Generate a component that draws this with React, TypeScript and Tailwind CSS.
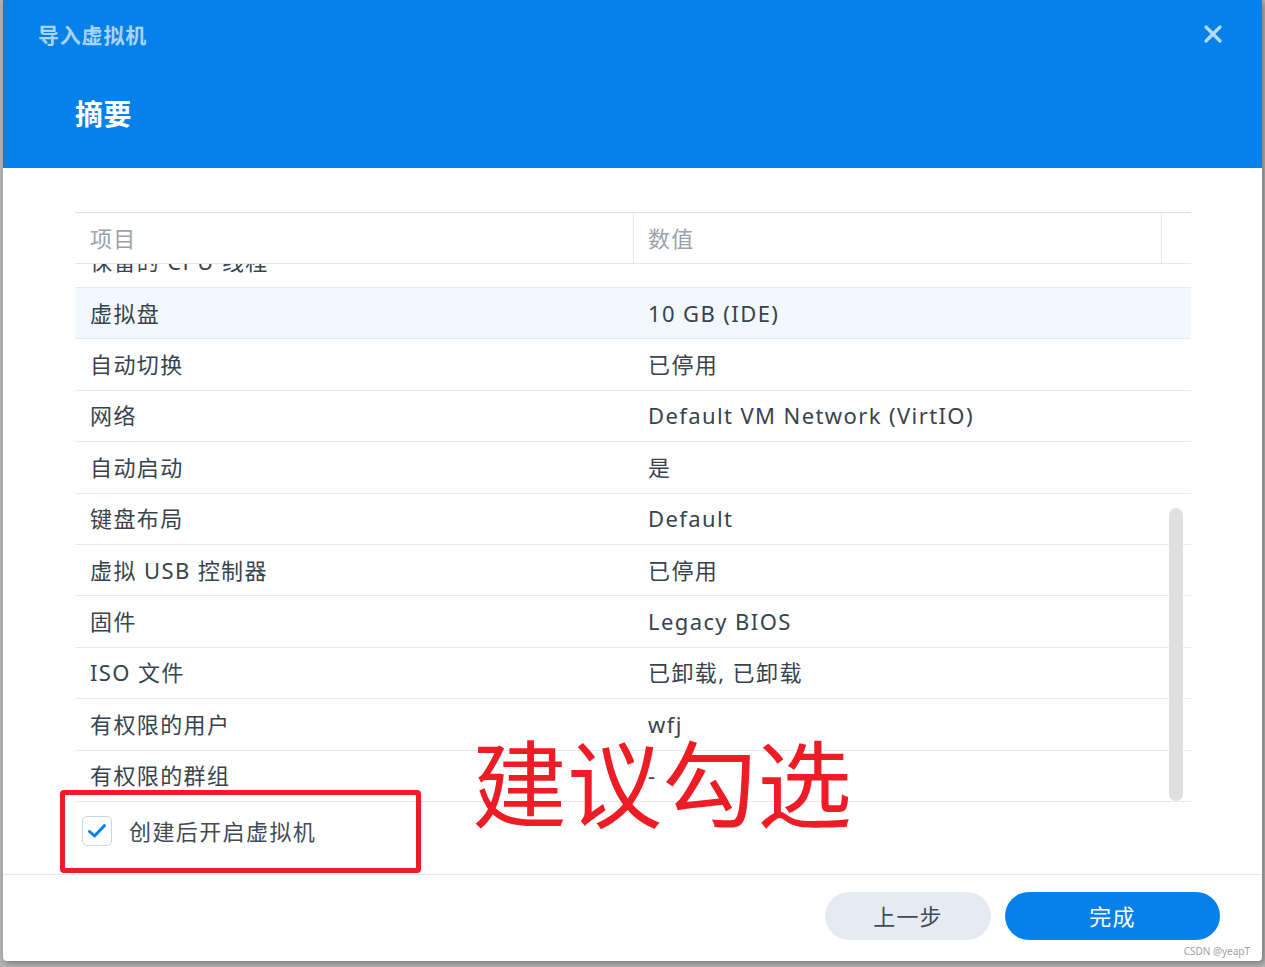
import React from "react";

const rows: [string, string][] = [
  ["保留的 CPU 线程", ""],
  ["虚拟盘", "10 GB (IDE)"],
  ["自动切换", "已停用"],
  ["网络", "Default VM Network (VirtIO)"],
  ["自动启动", "是"],
  ["键盘布局", "Default"],
  ["虚拟 USB 控制器", "已停用"],
  ["固件", "Legacy BIOS"],
  ["ISO 文件", "已卸载, 已卸载"],
  ["有权限的用户", "wfj"],
  ["有权限的群组", "-"],
];

const font = { fontFamily: '"Noto Sans", "Noto Sans CJK SC", sans-serif' };

export default function App() {
  return (
    <div
      className="w-[1265px] h-[967px] bg-[#b4b4b4] pl-[3px] overflow-hidden"
      style={font}
    >
      <div className="relative w-[1259px] h-[961px] bg-white rounded-b-[4px] flex flex-col shadow-[2px_2px_6px_rgba(0,0,0,0.35)]">
        {/* Header */}
        <div className="h-[168px] bg-[#0681ea] flex flex-col relative shrink-0">
          <div className="pl-[35px] pt-[20px] text-[21px] font-bold text-[#a9d3f9] leading-[30px] tracking-[0.8px]">
            导入虚拟机
          </div>
          <div className="pl-[72px] pt-[46px] text-[28px] font-bold text-white leading-[36px] tracking-[0.5px]">
            摘要
          </div>
          <div className="absolute right-[37px] top-[22px] w-[24px] h-[24px] flex items-center justify-center">
            <svg width="20" height="20" viewBox="0 0 20 20">
              <path
                d="M3 3 L17 17 M17 3 L3 17"
                stroke="#b6dcfb"
                strokeWidth="3.2"
                strokeLinecap="round"
              />
            </svg>
          </div>
        </div>

        {/* Body */}
        <div className="pt-[44px] px-[72px] shrink-0">
          <div className="relative w-[1116px] border-t border-[#d9e2ea]">
            {/* header row */}
            <div className="flex h-[51px] border-b border-[#e3e8ee] text-[22px] text-[#9aa2aa] tracking-[1.3px]">
              <div className="w-[558px] pl-[15px] flex items-center">项目</div>
              <div className="w-[528px] pl-[14px] flex items-center border-l border-[#e6eaef]">数值</div>
              <div className="w-[30px] border-l border-[#e6eaef]"></div>
            </div>
            {/* rows */}
            <div className="h-[538px] overflow-hidden">
              <div className="mt-[-27.4px]">
                {rows.map(([k, v], i) => (
                  <div
                    key={i}
                    className={`flex h-[51.4px] border-b border-[#e6eaef] text-[22px] text-[#37434e] tracking-[1.4px] ${
                      i === 1 ? "bg-[#f3f8fd]" : "bg-white"
                    }`}
                  >
                    <div className="w-[558px] pl-[15px] flex items-center whitespace-nowrap">{k}</div>
                    <div className="w-[528px] pl-[15px] flex items-center whitespace-nowrap">{v}</div>
                  </div>
                ))}
              </div>
            </div>
            {/* scrollbar thumb */}
            <div className="absolute left-[1094px] top-[295px] w-[14px] h-[293px] rounded-full bg-[#e0e0e0]"></div>
          </div>
        </div>

        {/* checkbox */}
        <div className="h-[73px] px-[79px] pt-[14px] flex items-start gap-[17px] border-b border-[#e3e8ee] shrink-0">
          <div className="w-[30px] h-[30px] rounded-[5px] border border-[#c9d6e3] bg-white flex items-center justify-center">
            <svg width="20" height="16" viewBox="0 0 20 16">
              <path
                d="M2.5 8.5 L7.5 13 L17.5 2.5"
                fill="none"
                stroke="#0681ea"
                strokeWidth="3"
                strokeLinecap="round"
                strokeLinejoin="round"
              />
            </svg>
          </div>
          <span className="text-[22px] leading-[30px] text-[#414b55] tracking-[1.4px]">创建后开启虚拟机</span>
        </div>

        {/* footer */}
        <div className="flex-1 flex justify-end items-start pt-[17px] pr-[42px] gap-[14px]">
          <button className="w-[166px] h-[48px] rounded-full bg-[#e6ebf2] text-[22px] text-[#414b55] tracking-[1.2px] flex items-center justify-center">
            上一步
          </button>
          <button className="w-[215px] h-[48px] rounded-full bg-[#0681ea] text-[22px] text-white tracking-[1.2px] flex items-center justify-center">
            完成
          </button>
        </div>
        <div className="absolute right-[12px] bottom-[3px] text-[10px] text-[#a0a0a0] leading-[14px]">
          CSDN @yeapT
        </div>

        {/* annotations */}
        <div className="absolute left-[57px] top-[790px] w-[361px] h-[83px] border-[5px] border-[#ee1c25] rounded-[4px]"></div>
        <div className="absolute left-[469px] top-[724px] text-[95px] leading-[120px] text-[#ee1c25] whitespace-nowrap">
          建议勾选
        </div>
      </div>
    </div>
  );
}
